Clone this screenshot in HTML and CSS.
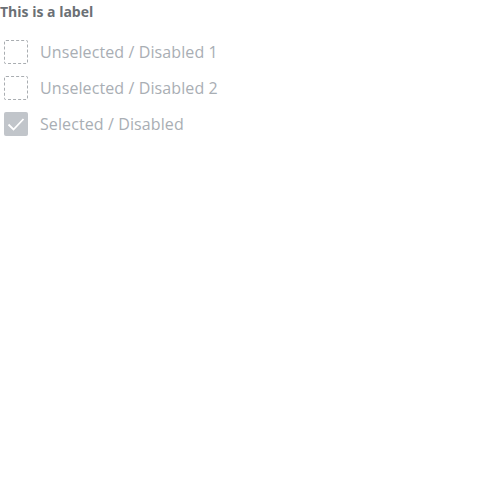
FILE: index.html
```html
<!DOCTYPE html>
<html>
<head>
<meta charset="utf-8">
<link rel="stylesheet" href="styles.css">
</head>
<body>
<div class="group">
  <div class="label">This is a label</div>
  <div class="list">
    <label class="item">
      <span class="box"></span>
      <span class="text">Unselected / Disabled 1</span>
    </label>
    <label class="item">
      <span class="box"></span>
      <span class="text">Unselected / Disabled 2</span>
    </label>
    <label class="item">
      <span class="box checked">
        <svg width="24" height="24" viewBox="0 0 24 24"><path d="M4.5 12.5 L9.5 17.5 L19.5 7" fill="none" stroke="#fff" stroke-width="1.8"/></svg>
      </span>
      <span class="text">Selected / Disabled</span>
    </label>
  </div>
</div>
</body>
</html>
```
FILE: styles.css
```css
body {
  margin: 0;
  font-family: "Open Sans", sans-serif;
  background: #fff;
}
.label {
  font-size: 14px;
  font-weight: 700;
  color: #6b7075;
  line-height: 24px;
  height: 24px;
}
.list {
  display: flex;
  flex-direction: column;
  padding-top: 16px;
  gap: 12px;
}
.item {
  display: flex;
  align-items: center;
  gap: 12px;
  padding-left: 4px;
  height: 24px;
}
.box {
  box-sizing: border-box;
  width: 24px;
  height: 24px;
  border: 1px dashed #a9adb1;
  border-radius: 2px;
  display: flex;
  align-items: center;
  justify-content: center;
}
.box.checked {
  border: none;
  background: #c1c5ca;
}
.text {
  font-size: 16px;
  letter-spacing: 0.1px;
  color: #a9aeb4;
  line-height: 24px;
}
```
